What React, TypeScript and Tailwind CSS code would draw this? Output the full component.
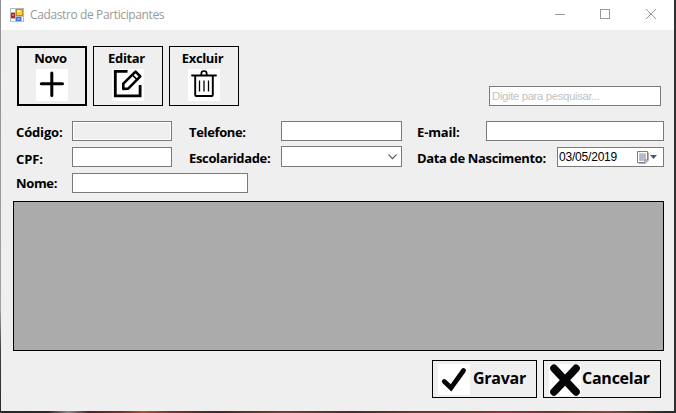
import type { ReactNode } from 'react';

const segoe = "font-['Open_Sans','Noto_Sans',sans-serif]";

function AppIcon() {
  return (
    <svg width="14" height="14" viewBox="0 0 14 14" shapeRendering="crispEdges">
      <rect width="14" height="14" fill="#b9b9b9" />
      <rect x="1" y="1" width="4" height="3" fill="#fff" />
      <rect x="1" y="11" width="4" height="2" fill="#fff" />
      <rect x="12" y="9" width="1" height="4" fill="#fff" />
      <rect x="1" y="5" width="4" height="5" fill="#b3261c" />
      <rect x="2" y="6" width="2" height="2" fill="#e0685c" />
      <rect x="6" y="1" width="7" height="7" fill="#c08a12" />
      <rect x="7" y="2" width="5" height="5" fill="#fcd24a" />
      <rect x="7" y="2" width="3" height="2" fill="#fff0a0" />
      <rect x="6" y="9" width="5" height="4" fill="#3f76d4" />
      <rect x="7" y="10" width="3" height="2" fill="#76a8f0" />
    </svg>
  );
}

function PlusIcon() {
  return (
    <svg width="32" height="32" viewBox="0 0 32 32" className="bg-white">
      <path d="M15.8 4v22.4M5.300 14.8h21.200" stroke="#000" strokeWidth="3" strokeLinecap="round" />
    </svg>
  );
}

function EditIcon() {
  return (
    <svg width="32" height="32" viewBox="0 0 32 32" fill="none" stroke="#000" className="bg-white">
      <path d="M15.5 2.3H3.3v24.6h24.8V16" strokeWidth="2.8" />
      <path d="M11.3 20v-5.4L23.5 2.6l4.8 4.8L16.2 19.6Z" strokeWidth="2.6" strokeLinejoin="round" />
      <path d="M20.5 6l4.6 4.6" strokeWidth="1.6" />
    </svg>
  );
}

function TrashIcon() {
  return (
    <svg width="32" height="32" viewBox="0 0 32 32" fill="none" stroke="#000" className="bg-white">
      <path d="M4 6.5h24" strokeWidth="1.8" strokeLinecap="round" />
      <path d="M13.300 6V4.600Q13.300 2 16 2t2.700 2.600V6" strokeWidth="1.7" />
      <path d="M7.200 7v19q0 1 1 1h15.600q1 0 1-1V7" strokeWidth="1.900" />
      <path d="M11.500 11.500v11M16 11.500v11M20.500 11.500v11" strokeWidth="1.300" />
    </svg>
  );
}

function CheckIcon() {
  return (
    <svg width="32" height="31" viewBox="0 0 32 31" className="bg-white">
      <path d="M6.300 17.500 13 23.800 25.500 6.500" fill="none" stroke="#050507" strokeWidth="4.800" strokeLinecap="round" strokeLinejoin="miter" />
    </svg>
  );
}

function CrossIcon() {
  return (
    <svg width="32" height="32" viewBox="0 0 32 32" className="bg-white">
      <path d="M5 4.300 27 27.900M27 4.300 5 27.900" fill="none" stroke="#050507" strokeWidth="7.600" strokeLinecap="round" />
    </svg>
  );
}

function CalendarIcon() {
  return (
    <svg width="12" height="13" viewBox="0 0 12 13" fill="none">
      <path d="M1.500 12.500H8.500L11.500 9.500V1.500" stroke="#b9b0aa" />
      <path d="M.5.500H10.500V9L8 11.500H.5Z" fill="#fff" stroke="#7d7c88" />
      <rect x="2" y="2" width="7" height="8" fill="#c9ccd8" />
      <path d="M2 4.500h7M2 6.500h7M2 8.500h7M3.500 3v7M5.500 3v7M7.500 3v7" stroke="#a7aaba" strokeWidth=".6" />
      <path d="M8 11.500V9h2.500" fill="#fff" stroke="#7d7c88" />
    </svg>
  );
}

function ToolButton({ label, primary, children }: { label: string; primary?: boolean; children: ReactNode }) {
  return (
    <button
      className={`flex h-[60px] w-[70px] flex-col items-center border-black text-[13px] font-bold ${
        primary ? 'border-2 pt-[2px]' : 'border pt-[3px]'
      }`}
    >
      <span className="-ml-[3px] h-[19px] leading-[16px] tracking-[-0.35px]">{label}</span>
      {children}
    </button>
  );
}

function Label({ children, className = '' }: { children: ReactNode; className?: string }) {
  return <label className={`pt-[3px] leading-[16px] whitespace-nowrap ${className}`}>{children}</label>;
}

function Field({ className }: { className: string }) {
  return <div className={`h-5 border border-[#7a7a7a] bg-white ${className}`} />;
}

export default function App() {
  return (
    <div
      className={`flex h-[413px] w-[676px] flex-col overflow-hidden bg-[linear-gradient(90deg,transparent_50%,#303030_50%),linear-gradient(180deg,#8f9094_0%,#a0a0a0_75%,#3c3d42_85%,#2c2c2c_100%)] pl-px text-black ${segoe}`}
    >
      <div className="flex h-[411px] w-[673px] flex-col bg-[#efefef]">
        <header className="flex h-[30px] shrink-0 items-center bg-white pl-[9px] text-[#999]">
          <AppIcon />
          <span className="ml-[6px] grow text-[12px] leading-[16px] tracking-[-0.38px]">Cadastro de Participantes</span>
          <svg width="119" height="30" viewBox="0 0 119 30" fill="none" stroke="#999">
            <path d="M0 14.500h10" />
            <rect x="45.500" y="9.500" width="9" height="9" />
            <path d="m91 9 10 10M101 9 91 19" />
          </svg>
        </header>

        <div className="flex h-[91px] shrink-0 gap-[6px] pt-4 pr-[13px] pl-4">
          <ToolButton label="Novo" primary>
            <PlusIcon />
          </ToolButton>
          <ToolButton label="Editar">
            <EditIcon />
          </ToolButton>
          <ToolButton label="Excluir">
            <TrashIcon />
          </ToolButton>
          <div className="mt-10 ml-auto h-5 w-[172px] border border-[#7a7a7a] bg-white pl-[2px] font-['Liberation_Sans',sans-serif] text-[11.5px] leading-[19px] tracking-[-0.42px] text-[#c3c3c3]">
            Digite para pesquisar...
          </div>
        </div>

        <div className="grid h-20 shrink-0 auto-rows-[26px] grid-cols-[56px_117px_92px_136px_247px] pl-[15px] text-[13px] font-bold tracking-[-0.35px]">
          <Label className="tracking-[-0.15px]">Código:</Label>
          <div className="h-5 w-[100px] border border-[#7a7a7a] bg-white p-px">
            <div className="h-full bg-[#efefef]" />
          </div>
          <Label>Telefone:</Label>
          <Field className="w-[121px]" />
          <div className="flex justify-between">
            <Label className="tracking-[-0.15px]">E-mail:</Label>
            <Field className="w-[178px]" />
          </div>

          <Label className="mt-[1px] tracking-[-0.15px]">CPF:</Label>
          <Field className="w-[100px]" />
          <Label>Escolaridade:</Label>
          <div className="-mt-px flex h-[21px] w-[121px] items-center justify-end border border-[#7a7a7a] bg-white pr-1">
            <svg width="9" height="6" viewBox="0 0 9 6" fill="none" stroke="#555">
              <path d="M.5.700l4 4 4-4" strokeWidth="1.200" />
            </svg>
          </div>
          <div className="flex justify-between">
            <Label>Data de Nascimento:</Label>
            <div className="flex h-5 w-[107px] items-center border border-[#7a7a7a] bg-white pr-[6px] pl-[1px] font-['Liberation_Sans',sans-serif] text-[12px] font-normal tracking-[-0.2px]">
              <span className="grow leading-[18px]">03/05/2019</span>
              <CalendarIcon />
              <svg width="7" height="4" viewBox="0 0 7 4" className="ml-px">
                <path d="M0 0h7L3.500 4Z" fill="#3f5a8a" />
              </svg>
            </div>
          </div>

          <Label className="-mt-px">Nome:</Label>
          <Field className="w-[176px]" />
        </div>

        <div className="ml-3 h-[150px] w-[651px] shrink-0 border border-black bg-[#ababab]" />

        <footer className="mt-[9px] flex justify-end gap-[6px] pr-[13px] text-[16px] font-bold tracking-[-0.25px]">
          <button className="flex h-[38px] w-[105px] items-start border border-black pt-[3px] pl-[5px]">
            <CheckIcon />
            <span className="ml-[3px] leading-[28px]">Gravar</span>
          </button>
          <button className="flex h-[38px] w-[118px] items-start border border-black pt-[3px] pl-[5px]">
            <CrossIcon />
            <span className="ml-[1px] leading-[28px]">Cancelar</span>
          </button>
        </footer>
      </div>
      <div className="h-[2px] bg-[linear-gradient(90deg,#26282a_0%,#302a2a_7%,#8c8588_10%,#55222a_13%,#7a3020_18%,#b55226_21%,#8a2c28_25%,#3a2a30_32%,#7c3a2c_42%,#4a2a30_52%,#733526_62%,#6b3a2e_69%,#9a2a44_75%,#6a3430_82%,#8a4a30_90%,#2c2c2c_98%)]" />
    </div>
  );
}
